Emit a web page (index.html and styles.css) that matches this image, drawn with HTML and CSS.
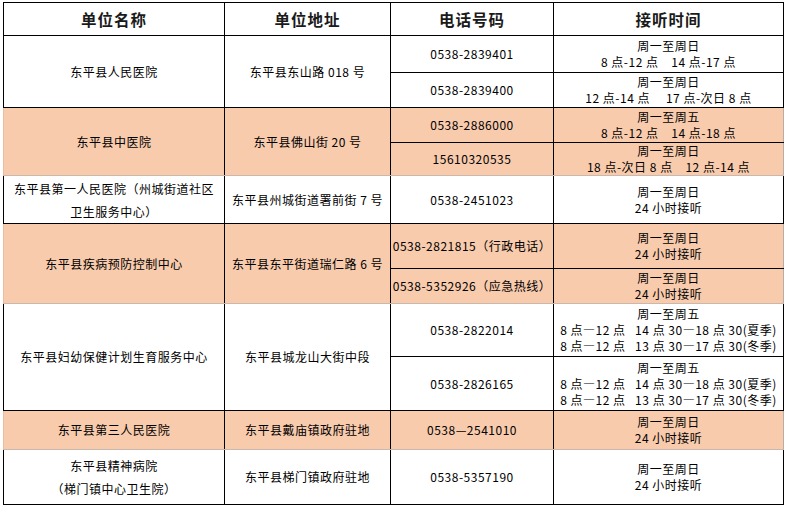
FILE: index.html
```html
<!DOCTYPE html>
<html lang="zh">
<head>
<meta charset="utf-8">
<title>东平县医疗机构值班电话</title>
<link rel="stylesheet" href="styles.css">
</head>
<body>
<table class="sheet">
  <colgroup>
    <col class="c-name"><col class="c-addr"><col class="c-tel"><col class="c-time">
  </colgroup>
  <thead>
    <tr class="h-head">
      <th>单位名称</th><th>单位地址</th><th>电话号码</th><th>接听时间</th>
    </tr>
  </thead>
  <tbody>
    <tr class="h37">
      <td rowspan="2">东平县人民医院</td>
      <td rowspan="2">东平县东山路 018 号</td>
      <td>0538-2839401</td>
      <td class="t2">周一至周日<br>8 点-12 点    14 点-17 点</td>
    </tr>
    <tr class="h35">
      <td>0538-2839400</td>
      <td class="t2">周一至周日<br>12 点-14 点     17 点-次日 8 点</td>
    </tr>

    <tr class="h35 pink top">
      <td rowspan="2" class="first">东平县中医院</td>
      <td rowspan="2">东平县佛山街 20 号</td>
      <td>0538-2886000</td>
      <td class="t2 last">周一至周五<br>8 点-12 点    14 点-18 点</td>
    </tr>
    <tr class="h33 pink bottom">
      <td>15610320535</td>
      <td class="t2 last">周一至周日<br>18 点-次日 8 点    12 点-14 点</td>
    </tr>

    <tr class="h48">
      <td class="tall">东平县第一人民医院（州城街道社区<br>卫生服务中心）</td>
      <td>东平县州城街道署前街 7 号</td>
      <td>0538-2451023</td>
      <td class="t2">周一至周日<br>24 小时接听</td>
    </tr>

    <tr class="h45 pink top">
      <td rowspan="2" class="first">东平县疾病预防控制中心</td>
      <td rowspan="2">东平县东平街道瑞仁路 6 号</td>
      <td>0538-2821815（行政电话）</td>
      <td class="t2 last">周一至周日<br>24 小时接听</td>
    </tr>
    <tr class="h35 pink bottom">
      <td>0538-5352926（应急热线）</td>
      <td class="t2 last">周一至周日<br>24 小时接听</td>
    </tr>

    <tr class="h53">
      <td rowspan="2">东平县妇幼保健计划生育服务中心</td>
      <td rowspan="2">东平县城龙山大街中段</td>
      <td>0538-2822014</td>
      <td class="t3">周一至周五<br>8 点—12 点   14 点 30—18 点 30(夏季)<br>8 点—12 点   13 点 30—17 点 30(冬季)</td>
    </tr>
    <tr class="h54">
      <td>0538-2826165</td>
      <td class="t3">周一至周五<br>8 点—12 点   14 点 30—18 点 30(夏季)<br>8 点—12 点   13 点 30—17 点 30(冬季)</td>
    </tr>

    <tr class="h39 pink top bottom">
      <td class="first">东平县第三人民医院</td>
      <td>东平县戴庙镇政府驻地</td>
      <td>0538—2541010</td>
      <td class="t2 last">周一至周日<br>24 小时接听</td>
    </tr>

    <tr class="h55">
      <td class="tall">东平县精神病院<br>（梯门镇中心卫生院）</td>
      <td>东平县梯门镇政府驻地</td>
      <td>0538-5357190</td>
      <td class="t2">周一至周日<br>24 小时接听</td>
    </tr>
  </tbody>
</table>
</body>
</html>
```

FILE: styles.css
```css
html, body {
  margin: 0;
  padding: 0;
  background: #ffffff;
}

body {
  padding: 2px 0 0 3px;
  font-family: "Noto Sans CJK SC", "Noto Sans", sans-serif;
  color: #000;
}

.sheet {
  border-collapse: collapse;
  table-layout: fixed;
  width: 780px;
  font-size: 12px;
  letter-spacing: 0.5px;
}

.c-name { width: 221px; }
.c-addr { width: 166px; }
.c-tel  { width: 163px; }
.c-time { width: 230px; }

.sheet th,
.sheet td {
  border: 1px solid #000;
  padding: 0;
  text-align: center;
  vertical-align: middle;
  white-space: pre;
  line-height: 16px;
}

.sheet th {
  font-size: 15.5px;
  font-weight: 700;
  letter-spacing: 1px;
  color: #1a1a1a;
  line-height: 20px;
}

.h-head { height: 33px; }
.h33 { height: 33px; }
.h35 { height: 35px; }
.h37 { height: 37px; }
.h39 { height: 39px; }
.h45 { height: 45px; }
.h48 { height: 48px; }
.h53 { height: 53px; }
.h54 { height: 54px; }
.h55 { height: 55px; }

.sheet td.t2 { line-height: 16px; }
.sheet td.t3 { line-height: 16px; }
.sheet td.tall { line-height: 23px; }

.pink td {
  background: #f8cbad;
}

.pink.top td {
  border-top-color: #c9b8ae;
}

.pink.bottom td,
.pink td[rowspan] {
  border-bottom-color: #c9b8ae;
}

.pink td.first {
  border-left-color: #e9bfa3;
}

.pink td.last {
  border-right-color: #b9aca5;
}
```
